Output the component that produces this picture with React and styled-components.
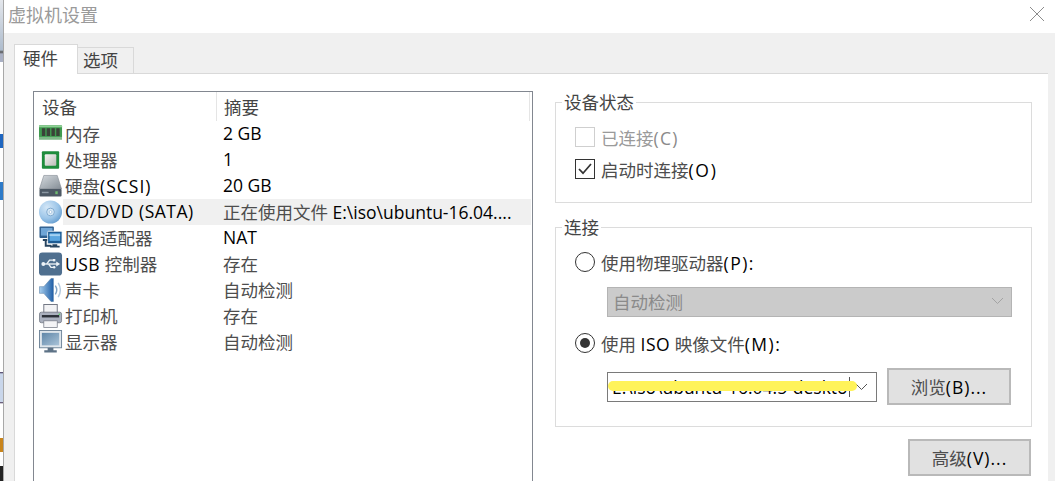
import styled, { createGlobalStyle } from "styled-components";

const GlobalStyle = createGlobalStyle`
  html, body {
    margin: 0;
    padding: 0;
    background: #fff;
    overflow: hidden;
  }
  * {
    box-sizing: border-box;
  }
`;

const Page = styled.div`
  display: flex;
  width: 1055px;
  height: 481px;
  overflow: hidden;
  color: #000;
  font-family: "Open Sans", "Noto Sans CJK SC", sans-serif;
  font-size: 17.5px;
`;

/* what shows of the page behind the dialog */
const Sliver = styled.div`
  flex: none;
  width: 4px;
  border-right: 1px solid #a8a8a8;
  background: linear-gradient(
    to bottom,
    #e4e7ec 0,
    #aebccd 50px,
    #555 52px,
    #a9b0c4 54px,
    #a9b0c4 62px,
    #fff 62px,
    #fff 134px,
    #1f66c0 134px,
    #1f66c0 148px,
    #fff 148px,
    #fff 182px,
    #2d7ac8 182px,
    #2d7ac8 200px,
    #fff 200px,
    #fff 372px,
    #3a2a50 372px,
    #c9d6ea 374px,
    #c9d6ea 402px,
    #3a2a50 402px,
    #fff 404px,
    #fff 438px,
    #c9851c 438px,
    #c9851c 452px,
    #fff 452px,
    #fff 466px,
    #222 466px
  );
`;

const Dialog = styled.div`
  flex: 1;
  display: flex;
  flex-direction: column;
  min-width: 0;
`;

const TitleBar = styled.div`
  flex: none;
  height: 33px;
  display: flex;
  align-items: center;
  justify-content: space-between;
  padding: 0 10px 5px 4px;
  background: #fff;
`;

const TitleText = styled.div`
  font-size: 18px;
  color: #9a9a9a;
`;

const Body = styled.div`
  flex: 1;
  display: flex;
  flex-direction: column;
  padding: 0 7px 0 10px;
  background: #f0f0f0;
  min-height: 0;
`;

const TabStrip = styled.div`
  flex: none;
  display: flex;
  align-items: flex-end;
  height: 41px;
  margin-bottom: -1px;
  position: relative;
  z-index: 1;
`;

const Tab = styled.div`
  display: flex;
  align-items: center;
  height: ${(p) => (p.$active ? "30px" : "27px")};
  width: ${(p) => (p.$active ? "64px" : "56px")};
  padding: 0 0 ${(p) => (p.$active ? "4px" : "2px")} ${(p) => (p.$active ? "8px" : "5px")};
  border: 1px solid #d9d9d9;
  border-bottom: ${(p) => (p.$active ? "none" : "1px solid #d9d9d9")};
  border-left: ${(p) => (p.$active ? "1px solid #d9d9d9" : "none")};
  background: ${(p) => (p.$active ? "#fff" : "#f0f0f0")};
  color: #444;
`;

const Pane = styled.div`
  flex: 1;
  display: flex;
  gap: 22px;
  min-height: 0;
  padding: 17px 0 0 18px;
  background: #fff;
  border-top: 1px solid #d9d9d9;
  border-left: 1px solid #d9d9d9;
`;

const DeviceList = styled.div`
  flex: none;
  width: 500px;
  height: 420px;
  border: 1px solid #828790;
  background: #fff;
`;

const ListHeader = styled.div`
  display: flex;
  height: 29px;
  color: #444;
`;

const HeaderCell = styled.div`
  display: flex;
  align-items: center;
  width: ${(p) => p.$width}px;
  padding-left: ${(p) => p.$pad}px;
  border-right: 1px solid #e5e5e5;
`;

const DeviceRow = styled.div`
  display: flex;
  align-items: center;
  height: 26px;
`;

const IconCell = styled.div`
  flex: none;
  width: 29px;
  height: 26px;
  padding-left: 5px;
  display: flex;
  align-items: center;
`;

const RowBody = styled.div`
  flex: 1;
  display: flex;
  align-items: center;
  height: 26px;
  margin-right: 1px;
  padding: 0 0 2px 2px;
  white-space: nowrap;
  background: ${(p) => (p.$selected ? "#f0f0f0" : "transparent")};
`;

const DeviceName = styled.div`
  flex: none;
  width: 158px;
`;

const Cn = styled.span`
  color: ${(p) => p.$color || "#4d4d4d"};
`;

/* capitals run wider in the reference than in Open Sans */
const Caps = styled.span`
  letter-spacing: ${(p) => p.$spacing || 0.5}px;
`;

const SideColumn = styled.div`
  flex: none;
  width: 477px;
  display: flex;
  flex-direction: column;
`;

const Group = styled.fieldset`
  margin: 0 0 ${(p) => p.$gap}px;
  height: ${(p) => p.$height}px;
  padding: 14px 0 0 19px;
  border: 1px solid #dcdcdc;
  min-width: 0;
`;

const GroupTitle = styled.legend`
  margin-left: -13px;
  padding: 0 2px;
  height: 22px;
  line-height: 22px;
  color: #444;
`;

const OptionRow = styled.div`
  display: flex;
  align-items: center;
  gap: 6px;
  height: 20px;
  margin-bottom: ${(p) => p.$gap || 0}px;
  color: ${(p) => (p.$disabled ? "#8a8a8a" : "#000")};
`;

const CheckBox = styled.div`
  flex: none;
  width: 20px;
  height: 20px;
  display: flex;
  align-items: center;
  justify-content: center;
  border: 1px solid ${(p) => (p.$disabled ? "#cfcfcf" : "#333")};
  background: #fff;
`;

const Radio = styled.div`
  flex: none;
  width: 20px;
  height: 20px;
  display: flex;
  align-items: center;
  justify-content: center;
  border: 1px solid #333;
  border-radius: 50%;
  background: #fff;
`;

const RadioDot = styled.div`
  width: 10px;
  height: 10px;
  border-radius: 50%;
  background: #333;
`;

const DisabledSelect = styled.div`
  display: flex;
  align-items: center;
  justify-content: space-between;
  width: 405px;
  height: 30px;
  margin: 0 0 16px 32px;
  padding: 0 7px 2px 5px;
  background: #cbcbcb;
  border: 1px solid #b4b4b4;
`;

const FileRow = styled.div`
  display: flex;
  align-items: center;
  gap: 10px;
  margin: 15px 0 0 32px;
`;

const Combo = styled.div`
  position: relative;
  flex: none;
  display: flex;
  align-items: center;
  justify-content: space-between;
  width: 270px;
  height: 30px;
  padding: 0 8px 0 4px;
  background: #fff;
  border: 1px solid #7a7a7a;
`;

const ComboText = styled.div`
  flex: none;
  width: 238px;
  white-space: nowrap;
  border-right: 1px solid #555;
  line-height: 20px;
`;

const Scribble = styled.div`
  position: absolute;
  left: 0;
  top: 8px;
  width: 249px;
  height: 10px;
  border-radius: 5px;
  background: #fff35a;
`;

const Button = styled.div`
  flex: none;
  display: flex;
  align-items: center;
  justify-content: center;
  width: ${(p) => p.$width}px;
  height: 37px;
  background: #e1e1e1;
  border: 2px solid #b9b9b9;
`;

const Footer = styled.div`
  display: flex;
  justify-content: flex-end;
  padding-right: 1px;
`;

const Chevron = ({ color }) => (
  <svg width="13" height="8" viewBox="0 0 13 8" fill="none" stroke={color}>
    <path d="M1 1l5.500 5.500L12 1" strokeWidth="1" />
  </svg>
);

const CloseIcon = () => (
  <svg width="16" height="16" viewBox="0 0 16 16" stroke="#8c8c8c" strokeWidth="1">
    <path d="M1 1l14 14M15 1L1 15" />
  </svg>
);

const CheckMark = () => (
  <svg width="14" height="12" viewBox="0 0 14 12" fill="none" stroke="#333" strokeWidth="1.700">
    <path d="M1 6l4 4.200L13 1" />
  </svg>
);

const MemoryIcon = () => (
  <svg width="25" height="26" viewBox="0 0 25 26">
    <rect x="0" y="4" width="24" height="13" rx="1" fill="#3f9a4f" />
    <rect x="0" y="4" width="24" height="2" fill="#8fcf95" />
    <rect x="0" y="16" width="24" height="3" fill="#7fb888" />
    <path d="M3 7h3.500v8H3zM8 7h3.500v8H8zM13 7h3.500v8H13zM18 7h3.500v8H18z" fill="#3a4238" />
  </svg>
);

const CpuIcon = () => (
  <svg width="25" height="26" viewBox="0 0 25 26">
    <defs>
      <linearGradient id="cpuCore" x1="0" y1="0" x2="1" y2="1">
        <stop offset="0" stopColor="#f4f4f2" />
        <stop offset="1" stopColor="#bdbdb8" />
      </linearGradient>
    </defs>
    <rect x="3" y="4" width="18" height="18" rx="1" fill="#1f8c3c" />
    <rect x="6" y="7" width="12" height="12" rx="1" fill="url(#cpuCore)" />
  </svg>
);

const DiskIcon = () => (
  <svg width="25" height="26" viewBox="0 0 25 26">
    <defs>
      <linearGradient id="diskTop" x1="0" y1="0" x2="1" y2="1">
        <stop offset="0" stopColor="#d5dade" />
        <stop offset="1" stopColor="#848d96" />
      </linearGradient>
    </defs>
    <path d="M5 2h14l4.500 14H0.500z" fill="url(#diskTop)" stroke="#7d858d" strokeWidth="0.600" />
    <rect x="0.500" y="16" width="23" height="8" rx="1" fill="#4c5864" />
    <rect x="3" y="19" width="7" height="1.500" fill="#8b97a2" />
    <rect x="17" y="18.500" width="2.500" height="3" fill="#6fbb6f" />
  </svg>
);

const DiscIcon = () => (
  <svg width="25" height="26" viewBox="0 0 25 26">
    <defs>
      <radialGradient id="discFace" cx="0.350" cy="0.300" r="0.800">
        <stop offset="0" stopColor="#d4e7f7" />
        <stop offset="0.600" stopColor="#9cc5e8" />
        <stop offset="1" stopColor="#5f98cc" />
      </radialGradient>
    </defs>
    <circle cx="12" cy="13" r="12" fill="url(#discFace)" />
    <circle cx="12" cy="13" r="4" fill="#d7e8f5" stroke="#7fa9cf" strokeWidth="1" />
    <circle cx="12" cy="13" r="1.500" fill="#fff" stroke="#7fa9cf" strokeWidth="0.600" />
  </svg>
);

const NetworkIcon = () => (
  <svg width="25" height="26" viewBox="0 0 25 26">
    <rect x="0.500" y="1" width="15" height="12" rx="1" fill="#2f5f8f" />
    <rect x="2" y="2.500" width="12" height="8" fill="#6fa5d6" />
    <path d="M4 14h7v2H8v4h5v2H6v-6H4z" fill="#27445f" />
    <rect x="9" y="6" width="15" height="13" rx="1" fill="#1e5c94" stroke="#fff" strokeWidth="0.800" />
    <rect x="11" y="8" width="11" height="8" fill="#5ba6e0" />
    <rect x="11" y="9" width="11" height="2" fill="#a5d2f2" />
    <path d="M14 19.500h5v1.500h2.500v1.800h-10v-1.800H14z" fill="#27445f" />
  </svg>
);

const UsbIcon = () => (
  <svg width="25" height="26" viewBox="0 0 25 26">
    <rect x="0" y="1" width="24" height="24" rx="3.500" fill="#4f6f8f" />
    <g stroke="#eef3f7" strokeWidth="1.400" fill="none">
      <path d="M5 13h14" />
      <path d="M8 13l3-4h4" />
      <path d="M10 13l2.500 3.500H15" />
    </g>
    <circle cx="4.500" cy="13" r="2" fill="#eef3f7" />
    <path d="M18 10.500l4 2.500-4 2.500z" fill="#eef3f7" />
    <rect x="14.500" y="7.800" width="2.500" height="2.500" fill="#eef3f7" />
    <circle cx="15.800" cy="16.500" r="1.300" fill="#eef3f7" />
  </svg>
);

const SpeakerIcon = () => (
  <svg width="25" height="26" viewBox="0 0 25 26">
    <defs>
      <linearGradient id="speakerCone" x1="0" y1="0" x2="1" y2="0">
        <stop offset="0" stopColor="#a9cfee" />
        <stop offset="1" stopColor="#1f5fa8" />
      </linearGradient>
    </defs>
    <path d="M0.500 9.500h4.500L12.500 1h2.500v24h-2.500L5 16.500H0.500z" fill="url(#speakerCone)" stroke="#44709c" strokeWidth="0.500" />
    <path d="M17 8.500q3 4.500 0 9" fill="none" stroke="#7fa3c6" strokeWidth="1.500" />
    <path d="M20 5.500q4.500 7.500 0 15" fill="none" stroke="#b3c9de" strokeWidth="1.500" />
  </svg>
);

const PrinterIcon = () => (
  <svg width="25" height="26" viewBox="0 0 25 26">
    <rect x="5" y="1" width="14" height="9" fill="#f3f3f5" stroke="#6f7480" strokeWidth="1" />
    <rect x="0.500" y="9" width="23" height="11" rx="2" fill="#aab0be" stroke="#6f7480" strokeWidth="0.800" />
    <rect x="3" y="12" width="18" height="2.500" fill="#2c3038" />
    <rect x="5" y="18" width="14" height="7" fill="#f4f4f6" stroke="#7a7f8b" strokeWidth="0.800" />
    <rect x="20.500" y="10.500" width="1.500" height="1.500" fill="#55d060" />
  </svg>
);

const MonitorIcon = () => (
  <svg width="25" height="26" viewBox="0 0 25 26">
    <defs>
      <linearGradient id="monitorScreen" x1="0" y1="0" x2="1" y2="1">
        <stop offset="0" stopColor="#5f86a8" />
        <stop offset="1" stopColor="#a9c3d8" />
      </linearGradient>
    </defs>
    <rect x="0.500" y="1" width="23" height="18" fill="#dfe6ec" stroke="#6f8599" strokeWidth="1" />
    <rect x="3" y="3.500" width="18" height="13" fill="url(#monitorScreen)" />
    <path d="M9 19h6v2.500h3.500V24h-13v-2.500H9z" fill="#5d7286" />
  </svg>
);

const devices = [
  { icon: <MemoryIcon />, name: <Cn>内存</Cn>, summary: "2 GB" },
  { icon: <CpuIcon />, name: <Cn>处理器</Cn>, summary: "1" },
  { icon: <DiskIcon />, name: <><Cn>硬盘</Cn><Caps $spacing={1}>(SCSI)</Caps></>, summary: "20 GB" },
  {
    icon: <DiscIcon />,
    name: <Caps>CD/DVD (SATA)</Caps>,
    summary: <><Cn>正在使用文件</Cn> E:\iso\ubuntu-16.04....</>,
    selected: true,
  },
  { icon: <NetworkIcon />, name: <Cn>网络适配器</Cn>, summary: "NAT" },
  { icon: <UsbIcon />, name: <><Caps>USB</Caps> <Cn>控制器</Cn></>, summary: <Cn>存在</Cn> },
  { icon: <SpeakerIcon />, name: <Cn>声卡</Cn>, summary: <Cn>自动检测</Cn> },
  { icon: <PrinterIcon />, name: <Cn>打印机</Cn>, summary: <Cn>存在</Cn> },
  { icon: <MonitorIcon />, name: <Cn>显示器</Cn>, summary: <Cn>自动检测</Cn> },
];

const App = () => {
  return (
    <Page>
      <GlobalStyle />
      <Sliver />
      <Dialog>
        <TitleBar>
          <TitleText>虚拟机设置</TitleText>
          <CloseIcon />
        </TitleBar>
        <Body>
          <TabStrip>
            <Tab $active>硬件</Tab>
            <Tab>选项</Tab>
          </TabStrip>
          <Pane>
            <DeviceList>
              <ListHeader>
                <HeaderCell $width={183} $pad={8}>设备</HeaderCell>
                <HeaderCell $width={313} $pad={7}>摘要</HeaderCell>
              </ListHeader>
              {devices.map((device, i) => (
                <DeviceRow key={i}>
                  <IconCell>{device.icon}</IconCell>
                  <RowBody $selected={device.selected}>
                    <DeviceName>{device.name}</DeviceName>
                    <div>{device.summary}</div>
                  </RowBody>
                </DeviceRow>
              ))}
            </DeviceList>
            <SideColumn>
              <Group $height={112} $gap={13}>
                <GroupTitle>设备状态</GroupTitle>
                <OptionRow $disabled $gap={12}>
                  <CheckBox $disabled />
                  <span><Cn $color="#9a9a9a">已连接</Cn><Caps $spacing={1.300}>(C)</Caps></span>
                </OptionRow>
                <OptionRow>
                  <CheckBox><CheckMark /></CheckBox>
                  <span><Cn>启动时连接</Cn><Caps $spacing={1.700}>(O)</Caps></span>
                </OptionRow>
              </Group>
              <Group $height={211} $gap={12}>
                <GroupTitle>连接</GroupTitle>
                <OptionRow $gap={15}>
                  <Radio />
                  <span><Cn>使用物理驱动器</Cn><Caps $spacing={1.500}>(P):</Caps></span>
                </OptionRow>
                <DisabledSelect>
                  <Cn $color="#8a8a8a">自动检测</Cn>
                  <Chevron color="#a3a3a3" />
                </DisabledSelect>
                <OptionRow>
                  <Radio><RadioDot /></Radio>
                  <span><Cn>使用</Cn> <Caps>ISO</Caps> <Cn>映像文件</Cn><Caps $spacing={1.500}>(M):</Caps></span>
                </OptionRow>
                <FileRow>
                  <Combo>
                    <ComboText>E:\iso\ubuntu-16.04.5-deskto</ComboText>
                    <Scribble />
                    <Chevron color="#555" />
                  </Combo>
                  <Button $width={124}><span><Cn>浏览</Cn><Caps $spacing={1}>(B)...</Caps></span></Button>
                </FileRow>
              </Group>
              <Footer>
                <Button $width={123}><span><Cn>高级</Cn><Caps $spacing={1}>(V)...</Caps></span></Button>
              </Footer>
            </SideColumn>
          </Pane>
        </Body>
      </Dialog>
    </Page>
  );
};

export default App;
